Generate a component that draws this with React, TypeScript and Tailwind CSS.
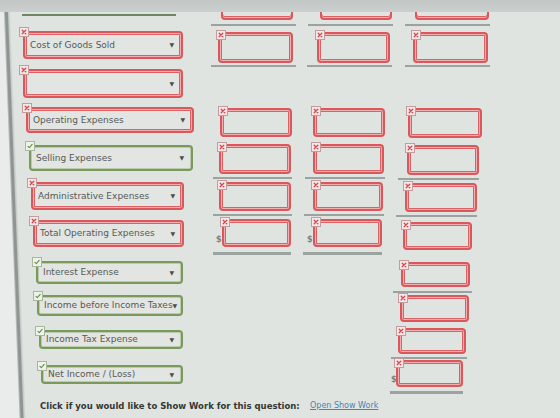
import React from "react";

type Mark = "x" | "check";

type Dropdown = {
  mark: Mark;
  cls: string;
  text: string;
};

type Cell = {
  wrap: string;
  box: string;
  line?: string;
  dollar?: string;
} | null;

type Row = {
  h: string;
  left: Dropdown;
  cells: [Cell, Cell, Cell];
};

const redFrame =
  "rounded-[4px] border-2 border-[#d9585c] shadow-[inset_0_0_0_1px_#f2aeb0,inset_0_0_0_2px_#dc6064]";
const greenFrame =
  "rounded-[4px] border-2 border-[#7a9a5b] shadow-[inset_0_0_0_1px_#bccbae]";

const rows: Row[] = [
  {
    h: "h-[38px]",
    left: { mark: "x", cls: "ml-[23px] mt-[5px] w-[160px] h-[28px]", text: "Cost of Goods Sold" },
    cells: [
      { wrap: "ml-[6px] mt-[6px] w-[85px]", box: "ml-[7px] w-[75px] h-[31px]", line: "mt-[2px] h-[2px]" },
      { wrap: "ml-[5px] mt-[6px] w-[85px]", box: "ml-[10px] w-[73px] h-[31px]", line: "mt-[2px] h-[2px]" },
      { wrap: "ml-[15px] mt-[6px] w-[85px]", box: "ml-[8px] w-[75px] h-[31px]", line: "mt-[2px] h-[2px]" },
    ],
  },
  {
    h: "h-[38px]",
    left: { mark: "x", cls: "ml-[23px] mt-[5px] w-[160px] h-[29px]", text: "" },
    cells: [null, null, null],
  },
  {
    h: "h-[38px]",
    left: { mark: "x", cls: "ml-[26px] mt-[5px] w-[168px] h-[26px]", text: "Operating Expenses" },
    cells: [
      { wrap: "ml-[15px] mt-[6px] w-[72px]", box: "w-[72px] h-[29px]" },
      { wrap: "ml-[11px] mt-[6px] w-[72px]", box: "w-[72px] h-[29px]" },
      { wrap: "ml-[18px] mt-[6px] w-[74px]", box: "w-[74px] h-[30px]" },
    ],
  },
  {
    h: "h-[38px]",
    left: { mark: "check", cls: "ml-[29px] mt-[5px] w-[164px] h-[26px]", text: "Selling Expenses" },
    cells: [
      { wrap: "ml-[8px] mt-[4px] w-[79px]", box: "ml-[6px] w-[72px] h-[30px]", line: "mt-[3px] h-[2px]" },
      { wrap: "ml-[3px] mt-[4px] w-[80px]", box: "ml-[8px] w-[71px] h-[30px]", line: "mt-[3px] h-[2px]" },
      { wrap: "ml-[8px] mt-[5px] w-[81px]", box: "ml-[9px] w-[72px] h-[30px]", line: "mt-[3px] h-[2px]" },
    ],
  },
  {
    h: "h-[38px]",
    left: { mark: "x", cls: "ml-[31px] mt-[4px] w-[153px] h-[28px]", text: "Administrative Expenses" },
    cells: [
      { wrap: "ml-[8px] mt-[4px] w-[79px]", box: "ml-[6px] w-[72px] h-[29px]", line: "mt-[3px] h-[2px]" },
      { wrap: "ml-[2px] mt-[4px] w-[80px]", box: "ml-[9px] w-[70px] h-[29px]", line: "mt-[3px] h-[2px]" },
      { wrap: "ml-[6px] mt-[5px] w-[81px]", box: "ml-[9px] w-[72px] h-[29px]", line: "mt-[3px] h-[2px]" },
    ],
  },
  {
    h: "h-[40px]",
    left: { mark: "x", cls: "ml-[33px] mt-[4px] w-[151px] h-[27px]", text: "Total Operating Expenses" },
    cells: [
      { wrap: "ml-[8px] mt-[3px] w-[78px]", dollar: "ml-[3px] w-[6px]", box: "w-[69px] h-[28px]", line: "mt-[5px] h-[3px]" },
      { wrap: "ml-[1px] mt-[3px] w-[79px]", dollar: "ml-[4px] w-[6px]", box: "w-[69px] h-[28px]", line: "mt-[5px] h-[3px]" },
      { wrap: "ml-[13px] mt-[6px] w-[69px]", box: "w-[69px] h-[28px]" },
    ],
  },
  {
    h: "h-[36px]",
    left: { mark: "check", cls: "ml-[36px] mt-[5px] w-[147px] h-[23px]", text: "Interest Expense" },
    cells: [
      null,
      null,
      { wrap: "ml-[3px] mt-[6px] w-[79px]", box: "ml-[8px] w-[69px] h-[25px]", line: "mt-[4px] h-[2px]" },
    ],
  },
  {
    h: "h-[33px]",
    left: { mark: "check", cls: "ml-[37px] mt-[3px] w-[146px] h-[21px]", text: "Income before Income Taxes" },
    cells: [null, null, { wrap: "ml-[10px] mt-[3px] w-[69px]", box: "w-[69px] h-[27px]" }],
  },
  {
    h: "h-[33px]",
    left: { mark: "check", cls: "ml-[39px] mt-[5px] w-[144px] h-[19px]", text: "Income Tax Expense" },
    cells: [
      null,
      null,
      { wrap: "ml-[1px] mt-[3px] w-[76px]", box: "ml-[7px] w-[68px] h-[26px]", line: "mt-[3px] h-[2px]" },
    ],
  },
  {
    h: "h-[38px]",
    left: { mark: "check", cls: "ml-[41px] mt-[7px] w-[142px] h-[19px]", text: "Net Income / (Loss)" },
    cells: [
      null,
      null,
      { wrap: "ml-[0px] mt-[2px] w-[73px]", dollar: "ml-[1px] w-[5px]", box: "w-[67px] h-[27px]", line: "mt-[4px] h-[3px]" },
    ],
  },
];

function Badge({ mark, pos }: { mark: Mark; pos: string }) {
  if (mark === "x") {
    return (
      <span
        className={`absolute ${pos} flex h-[10px] w-[10px] items-center justify-center border border-[#c49c9c] bg-[#f6e8e8]`}
      >
        <svg viewBox="0 0 8 8" className="h-[6px] w-[6px]">
          <path d="M1.6 1.6 6.4 6.4M6.4 1.6 1.6 6.4" stroke="#d3464b" strokeWidth="1.7" strokeLinecap="round" />
        </svg>
      </span>
    );
  }
  return (
    <span
      className={`absolute ${pos} flex h-[10px] w-[10px] items-center justify-center border border-[#a9b59e] bg-[#eef2ea]`}
    >
      <svg viewBox="0 0 8 8" className="h-[6px] w-[6px]">
        <path d="M1.2 4.4 3.1 6.2 6.9 1.8" fill="none" stroke="#5f9440" strokeWidth="1.5" strokeLinecap="round" strokeLinejoin="round" />
      </svg>
    </span>
  );
}

function Select({ d }: { d: Dropdown }) {
  const frame = d.mark === "x" ? redFrame : greenFrame;
  return (
    <div
      className={`relative flex shrink-0 items-center justify-between pl-[5px] pr-[7px] ${d.cls} ${frame} bg-[#e2e5e2]`}
    >
      <Badge mark={d.mark} pos="-left-[6px] -top-[6px]" />
      <span className="whitespace-nowrap text-[9px] leading-none text-[#565957]">{d.text}</span>
      <span className="text-[6px] leading-none text-[#4a4d4b]">▼</span>
    </div>
  );
}

function AmountCell({ c }: { c: Cell }) {
  if (!c) return null;
  return (
    <div className={`flex shrink-0 flex-col ${c.wrap}`}>
      <div className="flex items-end">
        {c.dollar && (
          <span className={`${c.dollar} shrink-0 pb-[3px] text-[8px] font-bold leading-none text-[#7b807e]`}>$</span>
        )}
        <div className={`relative shrink-0 ${c.box} ${redFrame}`}>
          <Badge mark="x" pos="-left-[4px] -top-[4px]" />
        </div>
      </div>
      {c.line && <div className={`${c.line} w-full bg-[#9aa3a0]`} />}
    </div>
  );
}

function PartialCell({ wrap, box }: { wrap: string; box: string }) {
  return (
    <div className={`flex shrink-0 flex-col ${wrap}`}>
      <div
        className={`${box} h-[8px] rounded-b-[4px] border-2 border-t-0 border-[#d9585c] shadow-[inset_0_-1px_0_#f2aeb0,inset_0_-2px_0_#dc6064]`}
      />
      <div className="mt-[4px] h-[2px] w-full bg-[#9aa3a0]" />
    </div>
  );
}

export default function App() {
  return (
    <div className="relative h-[418px] w-[560px] overflow-hidden bg-[#e0e4e0] bg-[linear-gradient(87.8deg,#e9ecea_0px,#e9ecea_19px,#b7bdbb_20px,#8e9593_21px,#8e9593_23px,#c4c9c7_24px,#e0e4e0_26px)] font-['DejaVu_Sans',sans-serif]">
      {/* browser chrome strip */}
      <div className="h-[12px] w-full bg-[linear-gradient(180deg,#c2c7c6,#cbcfce)]" />

      {/* tail of the row above */}
      <div className="flex h-[14px]">
        <div className="w-[205px] shrink-0">
          <div className="ml-[22px] mt-[2px] h-[2px] w-[154px] bg-[#6f8766]" />
        </div>
        <div className="w-[97px] shrink-0">
          <PartialCell wrap="ml-[6px] w-[85px]" box="ml-[10px] w-[72px]" />
        </div>
        <div className="w-[88px] shrink-0">
          <PartialCell wrap="ml-[6px] w-[85px]" box="ml-[12px] w-[72px]" />
        </div>
        <div className="shrink-0">
          <PartialCell wrap="ml-[15px] w-[85px]" box="ml-[10px] w-[74px]" />
        </div>
      </div>

      {rows.map((r, i) => (
        <div key={i} className={`flex ${r.h}`}>
          <div className="flex w-[205px] shrink-0 items-start">
            <Select d={r.left} />
          </div>
          <div className="flex w-[97px] shrink-0 items-start">
            <AmountCell c={r.cells[0]} />
          </div>
          <div className="flex w-[88px] shrink-0 items-start">
            <AmountCell c={r.cells[1]} />
          </div>
          <div className="flex shrink-0 items-start">
            <AmountCell c={r.cells[2]} />
          </div>
        </div>
      ))}

      <div className="flex h-[22px] items-start pl-[40px] pt-[5px]">
        <span className="w-[270px] shrink-0 whitespace-nowrap text-[8.5px] font-bold leading-[10px] text-[#333735]">
          Click if you would like to Show Work for this question:
        </span>
        <a className="whitespace-nowrap text-[8px] leading-[10px] text-[#4585b5] underline">Open Show Work</a>
      </div>
    </div>
  );
}
